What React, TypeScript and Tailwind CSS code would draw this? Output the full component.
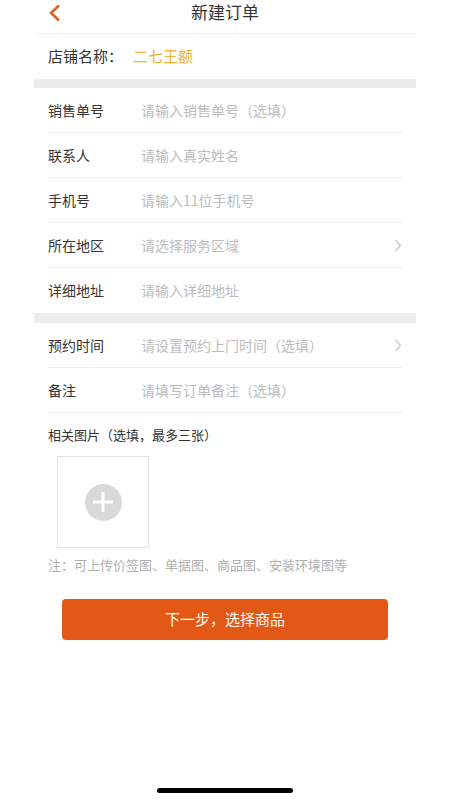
import React from "react";

type Row = { label: string; placeholder: string; arrow?: boolean; last?: boolean };

const groupA: Row[] = [
  { label: "销售单号", placeholder: "请输入销售单号（选填）" },
  { label: "联系人", placeholder: "请输入真实姓名" },
  { label: "手机号", placeholder: "请输入11位手机号" },
  { label: "所在地区", placeholder: "请选择服务区域", arrow: true },
  { label: "详细地址", placeholder: "请输入详细地址", last: true },
];

const groupB: Row[] = [
  { label: "预约时间", placeholder: "请设置预约上门时间（选填）", arrow: true },
  { label: "备注", placeholder: "请填写订单备注（选填）" },
];

const Chevron = () => (
  <svg width="8" height="13" viewBox="0 0 8 13" fill="none">
    <path d="M1.5 1L6.5 6.5L1.5 12" stroke="#c4c4c4" strokeWidth="1.2" />
  </svg>
);

const FormRow: React.FC<{ row: Row }> = ({ row }) => (
  <div
    className={`mx-[14px] h-[45px] flex items-center ${row.last ? "" : "border-b border-[#efefef]"}`}
  >
    <div className="w-[93px] text-[14px] text-[#333]">{row.label}</div>
    <div className="flex-1 text-[14px] text-[#bcbcbc]">{row.placeholder}</div>
    {row.arrow && <Chevron />}
  </div>
);

export default function App() {
  return (
    <div
      className="w-[450px] h-[800px] bg-white relative overflow-hidden"
      style={{ fontFamily: '"Noto Sans CJK SC", "Noto Sans", sans-serif' }}
    >
      <div className="w-[382px] mx-auto">
        {/* header */}
        <div className="h-[34px] border-b border-[#f0f0f0] relative flex justify-center">
          <svg className="absolute left-[14px] top-[4px]" width="13" height="18" viewBox="0 0 13 18" fill="none">
            <path d="M11 1.5L3 9L11 16.5" stroke="#e0601f" strokeWidth="2.6" />
          </svg>
          <div className="pt-[1px] text-[17px] leading-[22px] text-[#333]">新建订单</div>
        </div>

        {/* store */}
        <div className="h-[45px] px-[14px] flex items-center text-[15px]">
          <span className="w-[85px] text-[#333]">店铺名称：</span>
          <span className="text-[#f1b036]">二七王额</span>
        </div>

        <div className="h-[9px] bg-[#ececec]" />

        {groupA.map((r) => (
          <FormRow key={r.label} row={r} />
        ))}

        <div className="h-[10px] bg-[#ececec]" />

        {groupB.map((r) => (
          <FormRow key={r.label} row={r} />
        ))}

        {/* pictures */}
        <div className="px-[14px] pt-[12px]">
          <div className="text-[13px] leading-[20px] text-[#333]">相关图片（选填，最多三张）</div>
          <div className="mt-[11px] ml-[9px] w-[92px] h-[92px] border border-[#e2e2e2] flex items-center justify-center">
            <div className="w-[37px] h-[37px] rounded-full bg-[#d9d9d9] flex items-center justify-center">
              <svg width="22" height="22" viewBox="0 0 22 22">
                <rect x="9.5" y="1" width="3" height="20" fill="#fff" />
                <rect x="1" y="9.5" width="20" height="3" fill="#fff" />
              </svg>
            </div>
          </div>
          <div className="mt-[7px] text-[13px] leading-[20px] text-[#b0b0b0]">
            注：可上传价签图、单据图、商品图、安装环境图等
          </div>
        </div>

        {/* button */}
        <div className="px-[28px] pt-[24px]">
          <div className="h-[41px] rounded-[4px] bg-[#e35817] flex items-center justify-center text-[15px] text-white">
            下一步，选择商品
          </div>
        </div>
      </div>

      {/* home indicator */}
      <div className="absolute left-[157px] top-[788px] w-[136px] h-[5px] rounded-full bg-black" />
    </div>
  );
}
